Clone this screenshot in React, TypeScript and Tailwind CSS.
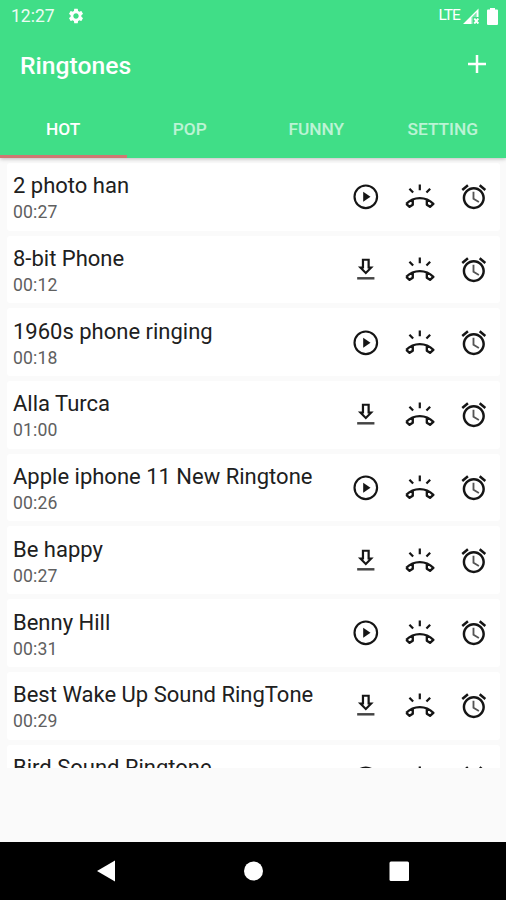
import React from "react";
import { MdSettings } from "react-icons/md";

type Tone = { name: string; time?: string; ready: boolean };

const tones: Tone[] = [
  { name: "2 photo han", time: "00:27", ready: true },
  { name: "8-bit Phone", time: "00:12", ready: false },
  { name: "1960s phone ringing", time: "00:18", ready: true },
  { name: "Alla Turca", time: "01:00", ready: false },
  { name: "Apple iphone 11 New Ringtone", time: "00:26", ready: true },
  { name: "Be happy", time: "00:27", ready: false },
  { name: "Benny Hill", time: "00:31", ready: true },
  { name: "Best Wake Up Sound RingTone", time: "00:29", ready: false },
  { name: "Bird Sound Ringtone", ready: true },
];

const tabs = ["HOT", "POP", "FUNNY", "SETTING"];
const icon = "block h-[29.6px] w-[29.6px] shrink-0";

function PlayIcon() {
  return (
    <svg viewBox="0 0 24 24" className={icon}>
      <circle cx="12" cy="12" r="9.15" fill="none" stroke="currentColor" strokeWidth="1.75" />
      <path d="M9.9 8v8l5.9-4z" fill="currentColor" />
    </svg>
  );
}

function DownloadIcon() {
  return (
    <svg viewBox="0 0 24 24" className={icon} fill="currentColor">
      <path d="M18.4 9.3H15.2V3H8.800v6.3H5.6L12 15.8zM10.6 11V4.7h2.8V11h1L12 13.4 9.6 11z" fillRule="evenodd" />
      <path d="M5 17.9h14v2H5z" fill="#444" />
    </svg>
  );
}

function RingIcon() {
  return (
    <svg viewBox="0 0 24 24" className={icon} fill="none" stroke="currentColor">
      <path d="M12 2v4.6M3.600 5.400l3 3.200M20.400 5.400l-3 3.200" strokeWidth="1.8" />
      <path d="M1 17.700C4 14.700 8 13.100 12 13.100s8 1.600 11 4.600l-2.700 2.400-2.600-1.700v-3.800M1 17.700l2.700 2.400 2.600-1.700v-3.800" strokeWidth="1.9" strokeLinejoin="round" />
    </svg>
  );
}

function AlarmIcon() {
  return (
    <svg viewBox="0 0 24 24" className={icon} fill="currentColor">
      <path d="M22 5.72l-4.6-3.86-1.29 1.53 4.6 3.86L22 5.72zM7.88 3.39L6.6 1.86 2 5.71l1.29 1.53 4.59-3.85zM12 4c-4.97 0-9 4.03-9 9s4.02 9 9 9c4.97 0 9-4.03 9-9s-4.03-9-9-9zm0 16c-3.87 0-7-3.13-7-7s3.13-7 7-7 7 3.13 7 7-3.13 7-7 7z" />
      <path d="M12.5 8H11v6l4.75 2.85.75-1.23-4-2.37V8z" fill="#555" />
    </svg>
  );
}

function Row({ tone }: { tone: Tone }) {
  return (
    <div className="flex h-[67.7px] shrink-0 items-start rounded-[3px] bg-white pl-[6px] pr-[11.2px]">
      <div className="flex-1 whitespace-nowrap pt-[9.4px]">
        <div className="text-[22px] leading-[28px] text-[#202020]">{tone.name}</div>
        {tone.time && <div className="text-[17.6px] leading-[24px] tracking-[0.15px] text-[#606060]">{tone.time}</div>}
      </div>
      <div className="flex gap-[24.4px] pt-[19.3px] text-[#151515]">
        {tone.ready ? <PlayIcon /> : <DownloadIcon />}
        <RingIcon />
        <AlarmIcon />
      </div>
    </div>
  );
}

export default function App() {
  return (
    <div className="flex h-[900px] w-[506px] flex-col overflow-hidden bg-[#fafafa] font-[Roboto,sans-serif]">
      <header className="z-10 flex h-[157.5px] shrink-0 flex-col bg-[#40de87] text-white shadow-[0_1px_4px_rgba(0,0,0,0.25)]">
        <div className="flex h-[32px] items-center pl-[11px] pr-[8px]">
          <span className="w-[56px] text-[17.500px] leading-[32px] text-white/90">12:27</span>
          <MdSettings className="size-[18px]" />
          <span className="ml-auto text-[15.5px] tracking-[-0.9px] text-white">LTE</span>
          <svg viewBox="0 0 16 16" className="ml-[3px] size-[16px]" fill="none">
            <path d="M0 16 15.5.5V9H10v7z" fill="white" />
            <path d="M8.500 9.5 13.600 4.200V9H10v7H8.500z" fill="#40de87" fillOpacity=".7" />
            <path d="m11.3 10.5 4 5m0-5-4 5" stroke="white" strokeWidth="2" />
          </svg>
          <svg viewBox="0 0 11 17" className="ml-[8px] h-[17px] w-[11px]" fill="white">
            <path d="M3 0h5v1.5h2q1 0 1 1V16q0 1-1 1H1q-1 0-1-1V2.500q0-1 1-1h2z" />
          </svg>
        </div>
        <div className="flex h-[68px] items-center justify-between pl-[20px] pr-[20px]">
          <h1 className="text-[24.7px] font-medium">Ringtones</h1>
          <svg viewBox="0 0 18 18" className="mb-[4px] size-[18px]">
            <path d="M9 0v18M0 9h18" stroke="white" strokeWidth="2.5" />
          </svg>
        </div>
        <nav className="grid flex-1 grid-cols-4 pt-[4px] text-center text-[17.3px] font-medium leading-[50px]">
          {tabs.map((t, i) => (
            <div key={t} className={i === 0 ? "border-b-[3px] border-[#cf7872]" : "text-white/65"}>
              {t}
            </div>
          ))}
        </nav>
      </header>
      <main className="flex h-[610.500px] shrink-0 flex-col gap-[5px] overflow-hidden pl-[7px] pr-[6px] pt-[5.5px]">
        {tones.map((t) => (
          <Row key={t.name} tone={t} />
        ))}
      </main>
      <footer className="mt-auto flex h-[58px] shrink-0 items-center bg-black">
        <svg viewBox="0 0 506 58" className="h-[58px] w-[506px]" fill="white">
          <path d="M115 18.500v21L97 29z" />
          <circle cx="253.5" cy="29" r="9.5" />
          <rect x="389.5" y="19.5" width="19.5" height="19.5" rx="1.5" />
        </svg>
      </footer>
    </div>
  );
}
